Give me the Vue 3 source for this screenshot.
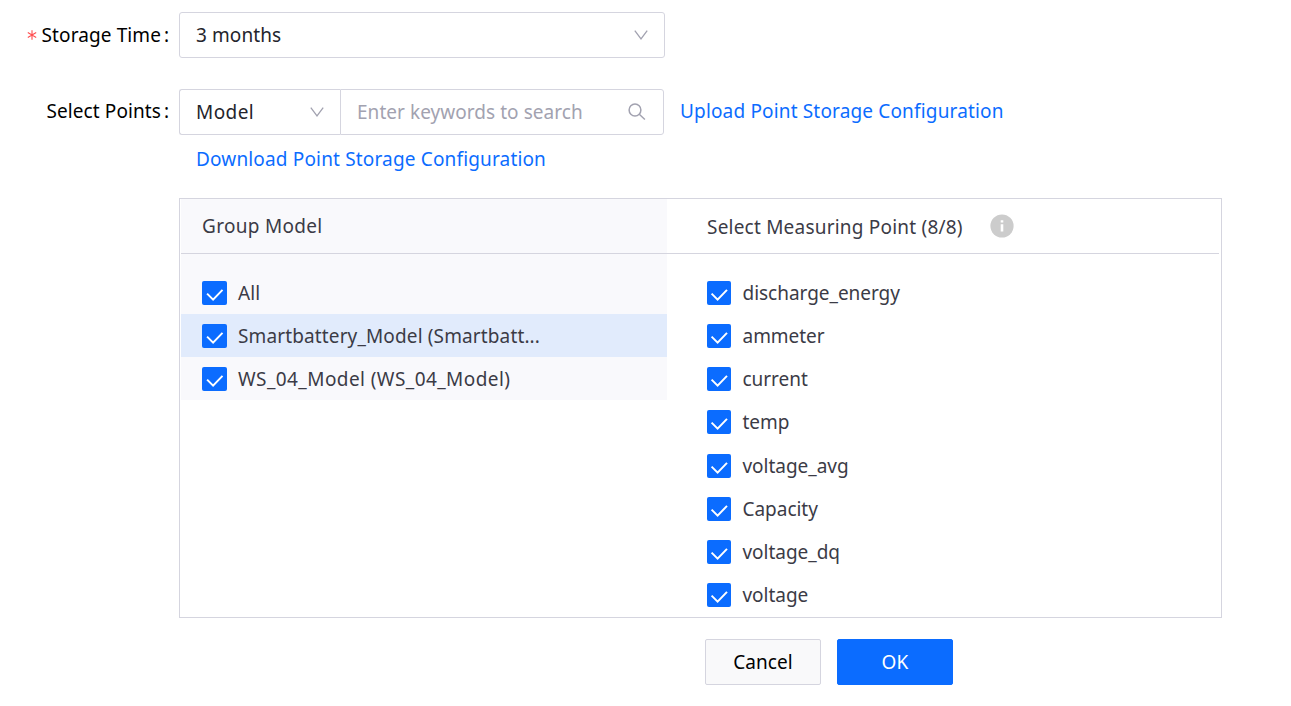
<script setup>
import { ref } from 'vue'

const groups = ref([
  { name: 'All', tone: '', active: false },
  { name: 'Smartbattery_Model (Smartbatt...', tone: 'snug', active: true },
  { name: 'WS_04_Model (WS_04_Model)', tone: 'loose', active: false },
])

const points = ref([
  'discharge_energy',
  'ammeter',
  'current',
  'temp',
  'voltage_avg',
  'Capacity',
  'voltage_dq',
  'voltage',
])
</script>

<template>
  <main class="form">
    <div class="row">
      <div class="label">
        <svg class="required" viewBox="0 0 10 10"><path d="M5 .3v9.4M.8 2.6l8.4 4.8M9.2 2.6L.8 7.4" /></svg>
        <span>Storage Time</span><span class="colon">:</span>
      </div>
      <div class="select">
        <span>3 months</span>
        <svg class="chevron" viewBox="0 0 14 10"><path d="M.8.6L7 8.9L13.2.6" /></svg>
      </div>
    </div>

    <div class="row second">
      <div class="label lifted"><span>Select Points</span><span class="colon">:</span></div>
      <div class="search-group">
        <div class="model">
          <span class="loose">Model</span>
          <svg class="chevron" viewBox="0 0 14 10"><path d="M.8.6L7 8.9L13.2.6" /></svg>
        </div>
        <div class="search">
          <span class="placeholder">Enter keywords to search</span>
          <svg class="magnifier" viewBox="0 0 18 18"><circle cx="7" cy="7" r="5.9" /><path d="M11.3 11.3l5.6 5.2" /></svg>
        </div>
      </div>
      <a class="link upload">Upload Point Storage Configuration</a>
    </div>
    <a class="link download">Download Point Storage Configuration</a>

    <section class="panel">
      <header class="head">
        <div class="head-left">Group Model</div>
        <div class="head-right">
          <span>Select Measuring Point (8/8)</span>
          <svg class="info" viewBox="0 0 24 24">
            <circle cx="12" cy="12" r="11.6" fill="#ccc" />
            <path d="M10.7 6.3h2.6v2.2h-2.6zM10.7 10.2h2.6v7.3h-2.6z" fill="#fff" />
          </svg>
        </div>
      </header>
      <div class="body">
        <ul class="groups">
          <li v-for="g in groups" :key="g.name" class="item" :class="{ active: g.active }">
            <span class="box wide"><svg viewBox="0 0 24 24"><path d="M4.6 12.6l6 6L20 8.9" /></svg></span>
            <span :class="g.tone">{{ g.name }}</span>
          </li>
        </ul>
        <ul class="points">
          <li v-for="p in points" :key="p" class="item">
            <span class="box"><svg viewBox="0 0 24 24"><path d="M4.6 12.6l6 6L20 8.9" /></svg></span>
            <span>{{ p }}</span>
          </li>
        </ul>
      </div>
    </section>

    <footer class="actions">
      <button class="btn">Cancel</button>
      <button class="btn primary">OK</button>
    </footer>
  </main>
</template>

<style>
body { background: #fff; }
</style>

<style scoped>
.form {
  box-sizing: border-box;
  width: 1291px;
  height: 706px;
  padding-top: 12px;
  overflow: hidden;
  font: 19px/26px "Noto Sans", "Open Sans", sans-serif;
  letter-spacing: 0.1px;
  color: #24242c;
  white-space: nowrap;
}
.row { display: flex; height: 46px; }
.second { margin-top: 31px; }
.label {
  box-sizing: border-box;
  width: 179px;
  padding-right: 10px;
  display: flex;
  align-items: center;
  justify-content: flex-end;
  color: #000;
}
.lifted { padding-bottom: 2px; }
.colon { margin-left: 3px; width: 5px; }
.required { width: 10px; height: 10px; margin-right: 5px; fill: none; stroke: #ff4d4f; stroke-width: 1.1; }
.select, .model, .search {
  box-sizing: border-box;
  display: flex;
  align-items: center;
  justify-content: space-between;
  border: 1px solid #d5d5df;
}
.select { width: 486px; padding: 0 16px; border-radius: 3px; }
.search-group { display: flex; width: 485px; }
.model { width: 161px; padding: 0 16px; border-right: 0; border-radius: 3px 0 0 3px; }
.search { width: 324px; padding: 0 17px 0 16px; border-radius: 0 3px 3px 0; color: #a2a2b0; }
.placeholder { letter-spacing: 0.05px; }
.loose { letter-spacing: 0.42px; }
.snug { letter-spacing: 0.13px; }
.chevron { width: 14px; height: 10px; fill: none; stroke: #a2a2b0; stroke-width: 1.3; }
.magnifier { width: 18px; height: 18px; fill: none; stroke: #a2a2b0; stroke-width: 1.5; }
.link { color: #0b6cff; letter-spacing: 0.16px; }
.upload { margin: 9px 0 0 16px; }
.download { display: block; width: max-content; margin: 11px 0 0 196px; }
.panel {
  box-sizing: border-box;
  width: 1043px;
  height: 420px;
  margin: 26px 0 0 179px;
  padding: 0 2px 0 1px;
  border: 1px solid #d5d5df;
  color: #3b3b46;
}
.head { display: flex; height: 54px; border-bottom: 1px solid #d5d5df; }
.head-left { box-sizing: border-box; width: 486px; padding: 14px 0 0 21px; background: #f9f9fc; letter-spacing: 0.3px; }
.head-right { display: flex; padding: 15px 0 0 40px; letter-spacing: 0.21px; }
.info { width: 24px; height: 24px; margin: 0 0 0 27px; }
.body { display: flex; align-items: flex-start; }
ul { list-style: none; margin: 0; padding: 17px 0 0; }
.groups { width: 486px; background: #f9f9fc; }
.item { display: flex; align-items: center; height: 43px; }
.groups .item { padding-left: 21px; gap: 11px; }
.active { background: #e1ebfc; }
.points { padding-top: 17.42px; letter-spacing: -0.03px; }
.points .item { height: 43.15px; padding-left: 40px; gap: 11.5px; }
.box { width: 24px; height: 24px; border-radius: 2px; background: #0b6cff; }
.wide { width: 25px; }
.box svg { display: block; width: 100%; height: 24px; fill: none; stroke: #fff; stroke-width: 2; }
.actions { display: flex; gap: 16px; margin: 21px 0 0 705px; }
.btn {
  box-sizing: border-box;
  width: 116px;
  height: 46px;
  padding: 0;
  border: 1px solid #d5d5df;
  border-radius: 2px;
  background: #f9f9fa;
  font: inherit;
  letter-spacing: inherit;
  color: #000;
}
.primary { border-color: #0b6cff; background: #0b6cff; color: #fff; }
</style>
